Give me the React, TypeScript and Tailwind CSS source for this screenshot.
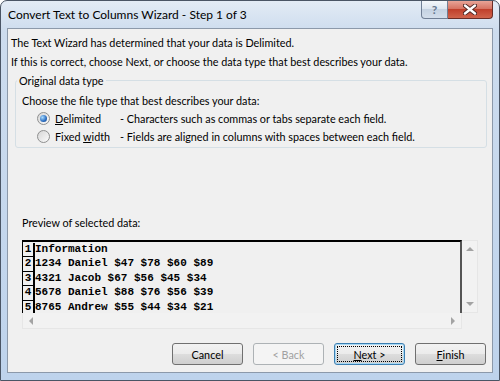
import type { ReactNode } from "react";

const ui = "font-['Lato','Liberation_Sans',sans-serif]";
const mono = "font-['Liberation_Mono','Courier_New',monospace]";

const rows = [
  "Information",
  "1234 Daniel $47 $78 $60 $89",
  "4321 Jacob $67 $56 $45 $34",
  "5678 Daniel $88 $76 $56 $39",
  "8765 Andrew $55 $44 $34 $21",
];

function Radio({ checked }: { checked?: boolean }) {
  return (
    <span className="flex h-[13px] w-[13px] shrink-0 items-center justify-center rounded-full border border-[#8e8f8f] bg-gradient-to-br from-[#d6d6d6] to-[#fbfbfb]">
      {checked && (
        <span className="h-[7px] w-[7px] rounded-full bg-[radial-gradient(circle_at_35%_35%,#a8dcff,#2a6cc0_60%,#123f7d)]" />
      )}
    </span>
  );
}

function Btn({ children, disabled, focused }: { children: ReactNode; disabled?: boolean; focused?: boolean }) {
  const border = disabled ? "border-[#adb2b5]" : focused ? "border-[#3c7fb1] shadow-[0_0_0_1px_#a8d9f5_inset]" : "border-[#707070]";
  const bg = disabled ? "bg-[#f4f4f4]" : "bg-[linear-gradient(#f2f2f2_0%,#ebebeb_50%,#dddddd_50%,#cfcfcf_100%)]";
  return (
    <div className={`flex h-[22px] w-[71px] items-center justify-center rounded-[3px] border ${border} ${bg} ${disabled ? "text-[#a0a0a0]" : "text-black"}`}>
      {focused ? (
        <span className="flex h-[16px] w-[65px] items-center justify-center border border-dotted border-black">{children}</span>
      ) : (
        children
      )}
    </div>
  );
}

function Tri({ dir }: { dir: "up" | "down" | "left" | "right" }) {
  const pts = { up: "0,4 4,0 8,4", down: "0,0 8,0 4,4", left: "4,0 4,8 0,4", right: "0,0 4,4 0,8" }[dir];
  const vert = dir === "up" || dir === "down";
  return (
    <svg width={vert ? 8 : 4} height={vert ? 4 : 8} viewBox={vert ? "0 0 8 4" : "0 0 4 8"}>
      <polygon points={pts} fill="#a3a3a3" />
    </svg>
  );
}

export default function App() {
  return (
    <div className={`${ui} h-[381px] w-[500px] bg-white text-[10.8px] leading-[15px] text-black`}>
      <div className="flex h-full w-full flex-col rounded-t-[7px] border border-[#4a5565] bg-[linear-gradient(#e3ebf5,#cddcee_30px,#bed3ec)]">
        {/* title bar */}
        <div className="flex h-[27px] shrink-0 items-start pl-[7px] pr-[6px]">
          <div className="pt-[6px] text-[12px]">Convert Text to Columns Wizard - Step 1 of 3</div>
          <div className="ml-auto flex">
            <div className="flex h-[18px] w-[27px] items-center justify-center rounded-bl-[4px] border border-t-0 border-[#707f95] bg-[linear-gradient(#f4f7fb,#dbe4ef_50%,#c5d2e2_50%,#d3deeb)] text-[12px] font-bold text-[#66778f]">
              ?
            </div>
            <div className="flex h-[18px] w-[45px] items-center justify-center rounded-br-[4px] border border-l-0 border-t-0 border-[#6b2d26] bg-[linear-gradient(#e8a497,#d46e5d_50%,#c0402c_50%,#d0644c)]">
              <svg width="14" height="11" viewBox="0 0 14 11">
                <path d="M2 1.5 L12 9.5 M12 1.5 L2 9.5" stroke="#4a2320" strokeWidth="4.2" strokeLinecap="round" />
                <path d="M2 1.5 L12 9.5 M12 1.5 L2 9.5" stroke="#ffffff" strokeWidth="2.4" strokeLinecap="round" />
              </svg>
            </div>
          </div>
        </div>

        {/* client area */}
        <div className="mx-[6px] mb-[7px] flex flex-1 flex-col border border-[#8c99aa] bg-[#f0f0f0]">
          <div className="ml-[3px] pt-[6px]">The Text Wizard has determined that your data is Delimited.</div>
          <div className="ml-[3px] mt-[4px]">If this is correct, choose Next, or choose the data type that best describes your data.</div>

          <fieldset className="ml-[7px] mr-[5px] mt-[4px] rounded-[3px] border border-[#d5dfe5] pb-[2px] pl-[6px]">
            <legend className="-ml-[5px] px-[2px]">Original data type</legend>
            <div className="mt-[5px]">Choose the file type that best describes your data:</div>
            <div className="mt-[1px] flex h-[18px] items-center">
              <span className="ml-[15px]">
                <Radio checked />
              </span>
              <span className="ml-[5px] w-[65px]">
                <u>D</u>elimited
              </span>
              <span>- Characters such as commas or tabs separate each field.</span>
            </div>
            <div className="flex h-[18px] items-center">
              <span className="ml-[15px]">
                <Radio />
              </span>
              <span className="ml-[5px] w-[65px]">
                Fixed <u>w</u>idth
              </span>
              <span>- Fields are aligned in columns with spaces between each field.</span>
            </div>
          </fieldset>

          <div className="ml-[14px] mt-[67px]">Preview of selected data:</div>

          <div className="ml-[14px] mt-[10px] flex">
            <div className="flex flex-col">
              <div className="h-[73px] w-[440px] overflow-hidden border-l border-r-2 border-t-2 border-black border-r-[#555]">
                <div className={`${mono} flex flex-col pt-[1px] text-[11px] font-bold leading-[13.4px]`}>
                  {rows.map((r, i) => (
                    <div key={i} className="flex">
                      <span className="w-[12px] border-b border-r-2 border-black text-center">{i + 1}</span>
                      <span className="whitespace-pre">{r}</span>
                    </div>
                  ))}
                  <div className="flex">
                    <span className="h-[13px] w-[12px] border-r-2 border-black" />
                  </div>
                </div>
              </div>
              <div className="flex h-[16px] w-[440px] items-center justify-between border border-t-0 border-[#e6e6e6] bg-[#f2f2f2] px-[6px]">
                <Tri dir="left" />
                <Tri dir="right" />
              </div>
            </div>
            <div className="flex h-[73px] w-[16px] flex-col items-center justify-between border border-l-0 border-[#e6e6e6] bg-[#f2f2f2] py-[6px]">
              <Tri dir="up" />
              <Tri dir="down" />
            </div>
          </div>

          <div className="mt-[14px] flex justify-end pr-[6px]">
            <Btn>Cancel</Btn>
            <div className="ml-[10px]">
              <Btn disabled>&lt; Back</Btn>
            </div>
            <div className="ml-[10px]">
              <Btn focused>
                <span>
                  <u>N</u>ext &gt;
                </span>
              </Btn>
            </div>
            <div className="ml-[10px]">
              <Btn>
                <span>
                  <u>F</u>inish
                </span>
              </Btn>
            </div>
          </div>
        </div>
      </div>
    </div>
  );
}
